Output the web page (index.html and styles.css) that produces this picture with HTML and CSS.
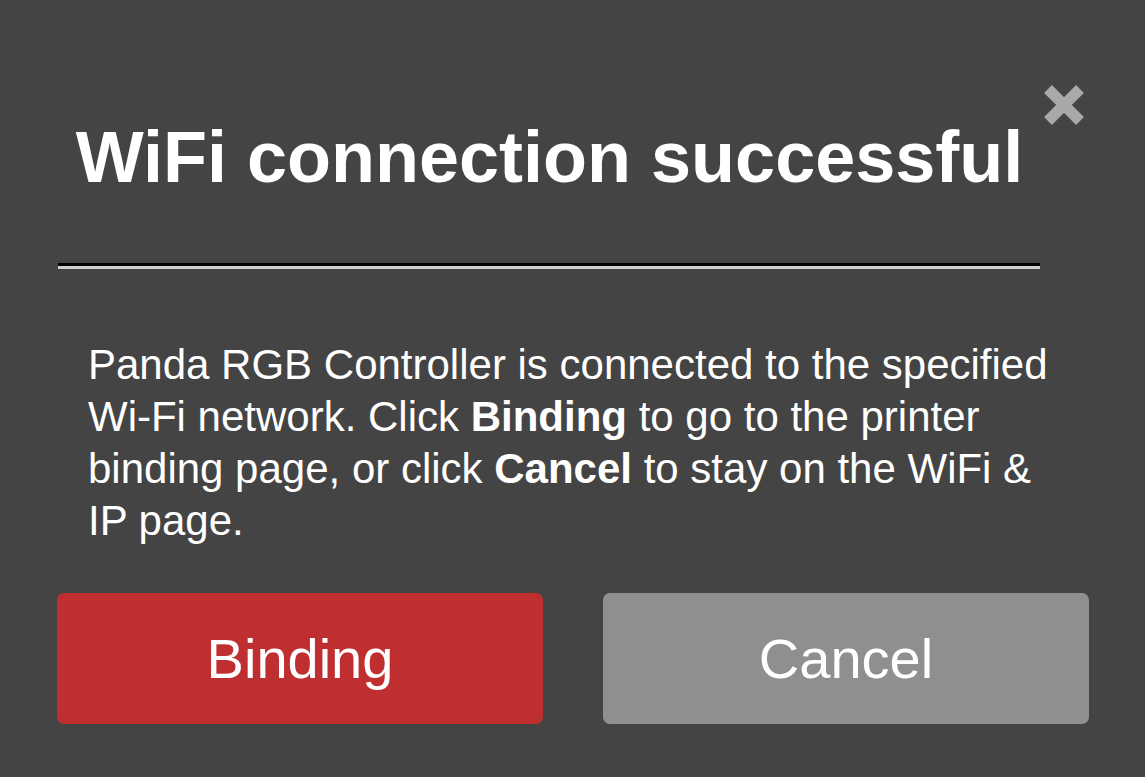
FILE: index.html
```html
<!DOCTYPE html>
<html>
<head>
<meta charset="utf-8">
<link rel="stylesheet" href="styles.css">
</head>
<body>
<div class="dialog">
  <div class="header">
    <h1 class="title">WiFi connection successful</h1>
    <button class="close" aria-label="Close">
      <svg width="40" height="40" viewBox="0 0 40 40"><path d="M4 4 L36 36 M36 4 L4 36" stroke="#a9a9a9" stroke-width="11" fill="none"/></svg>
    </button>
  </div>
  <hr class="sep">
  <p class="msg">Panda RGB Controller is connected to the specified Wi-Fi network. Click <b>Binding</b> to go to the printer binding page, or click <b>Cancel</b> to stay on the WiFi &amp; IP page.</p>
  <div class="actions">
    <button class="btn btn-primary">Binding</button>
    <button class="btn btn-secondary">Cancel</button>
  </div>
</div>
</body>
</html>
```

FILE: styles.css
```css
html, body {
  margin: 0;
  padding: 0;
  background: #444444;
}
body {
  font-family: "Liberation Sans", Arial, sans-serif;
  color: #ffffff;
  width: 1145px;
  height: 777px;
  overflow: hidden;
}
.dialog {
  padding: 117px 56px 0 57px;
}
.header {
  position: relative;
  width: 983px;
  margin-left: 1px;
}
.title {
  margin: 0;
  font-size: 72px;
  line-height: 80px;
  font-weight: bold;
  text-align: center;
}
.close {
  position: absolute;
  top: -32px;
  right: -43px;
  width: 40px;
  height: 40px;
  padding: 0;
  border: 0;
  background: transparent;
  display: block;
}
.close svg {
  display: block;
}
.sep {
  margin: 66px 0 0 1px;
  width: 982px;
  height: 0;
  border: 0;
  border-top: 3px solid #000000;
  border-bottom: 3px solid #cfcfcf;
}
.msg {
  margin: 70px 31px 0 31px;
  font-size: 42px;
  line-height: 52px;
}
.msg b {
  font-weight: bold;
}
.actions {
  margin-top: 46px;
  display: flex;
  gap: 60px;
}
.btn {
  flex: 1;
  height: 131px;
  border: 0;
  border-radius: 7px;
  color: #ffffff;
  font-family: "Liberation Sans", Arial, sans-serif;
  font-size: 56px;
  padding: 0;
}
.btn-primary {
  background: #c02f30;
}
.btn-secondary {
  background: #8f8f8f;
}
```
